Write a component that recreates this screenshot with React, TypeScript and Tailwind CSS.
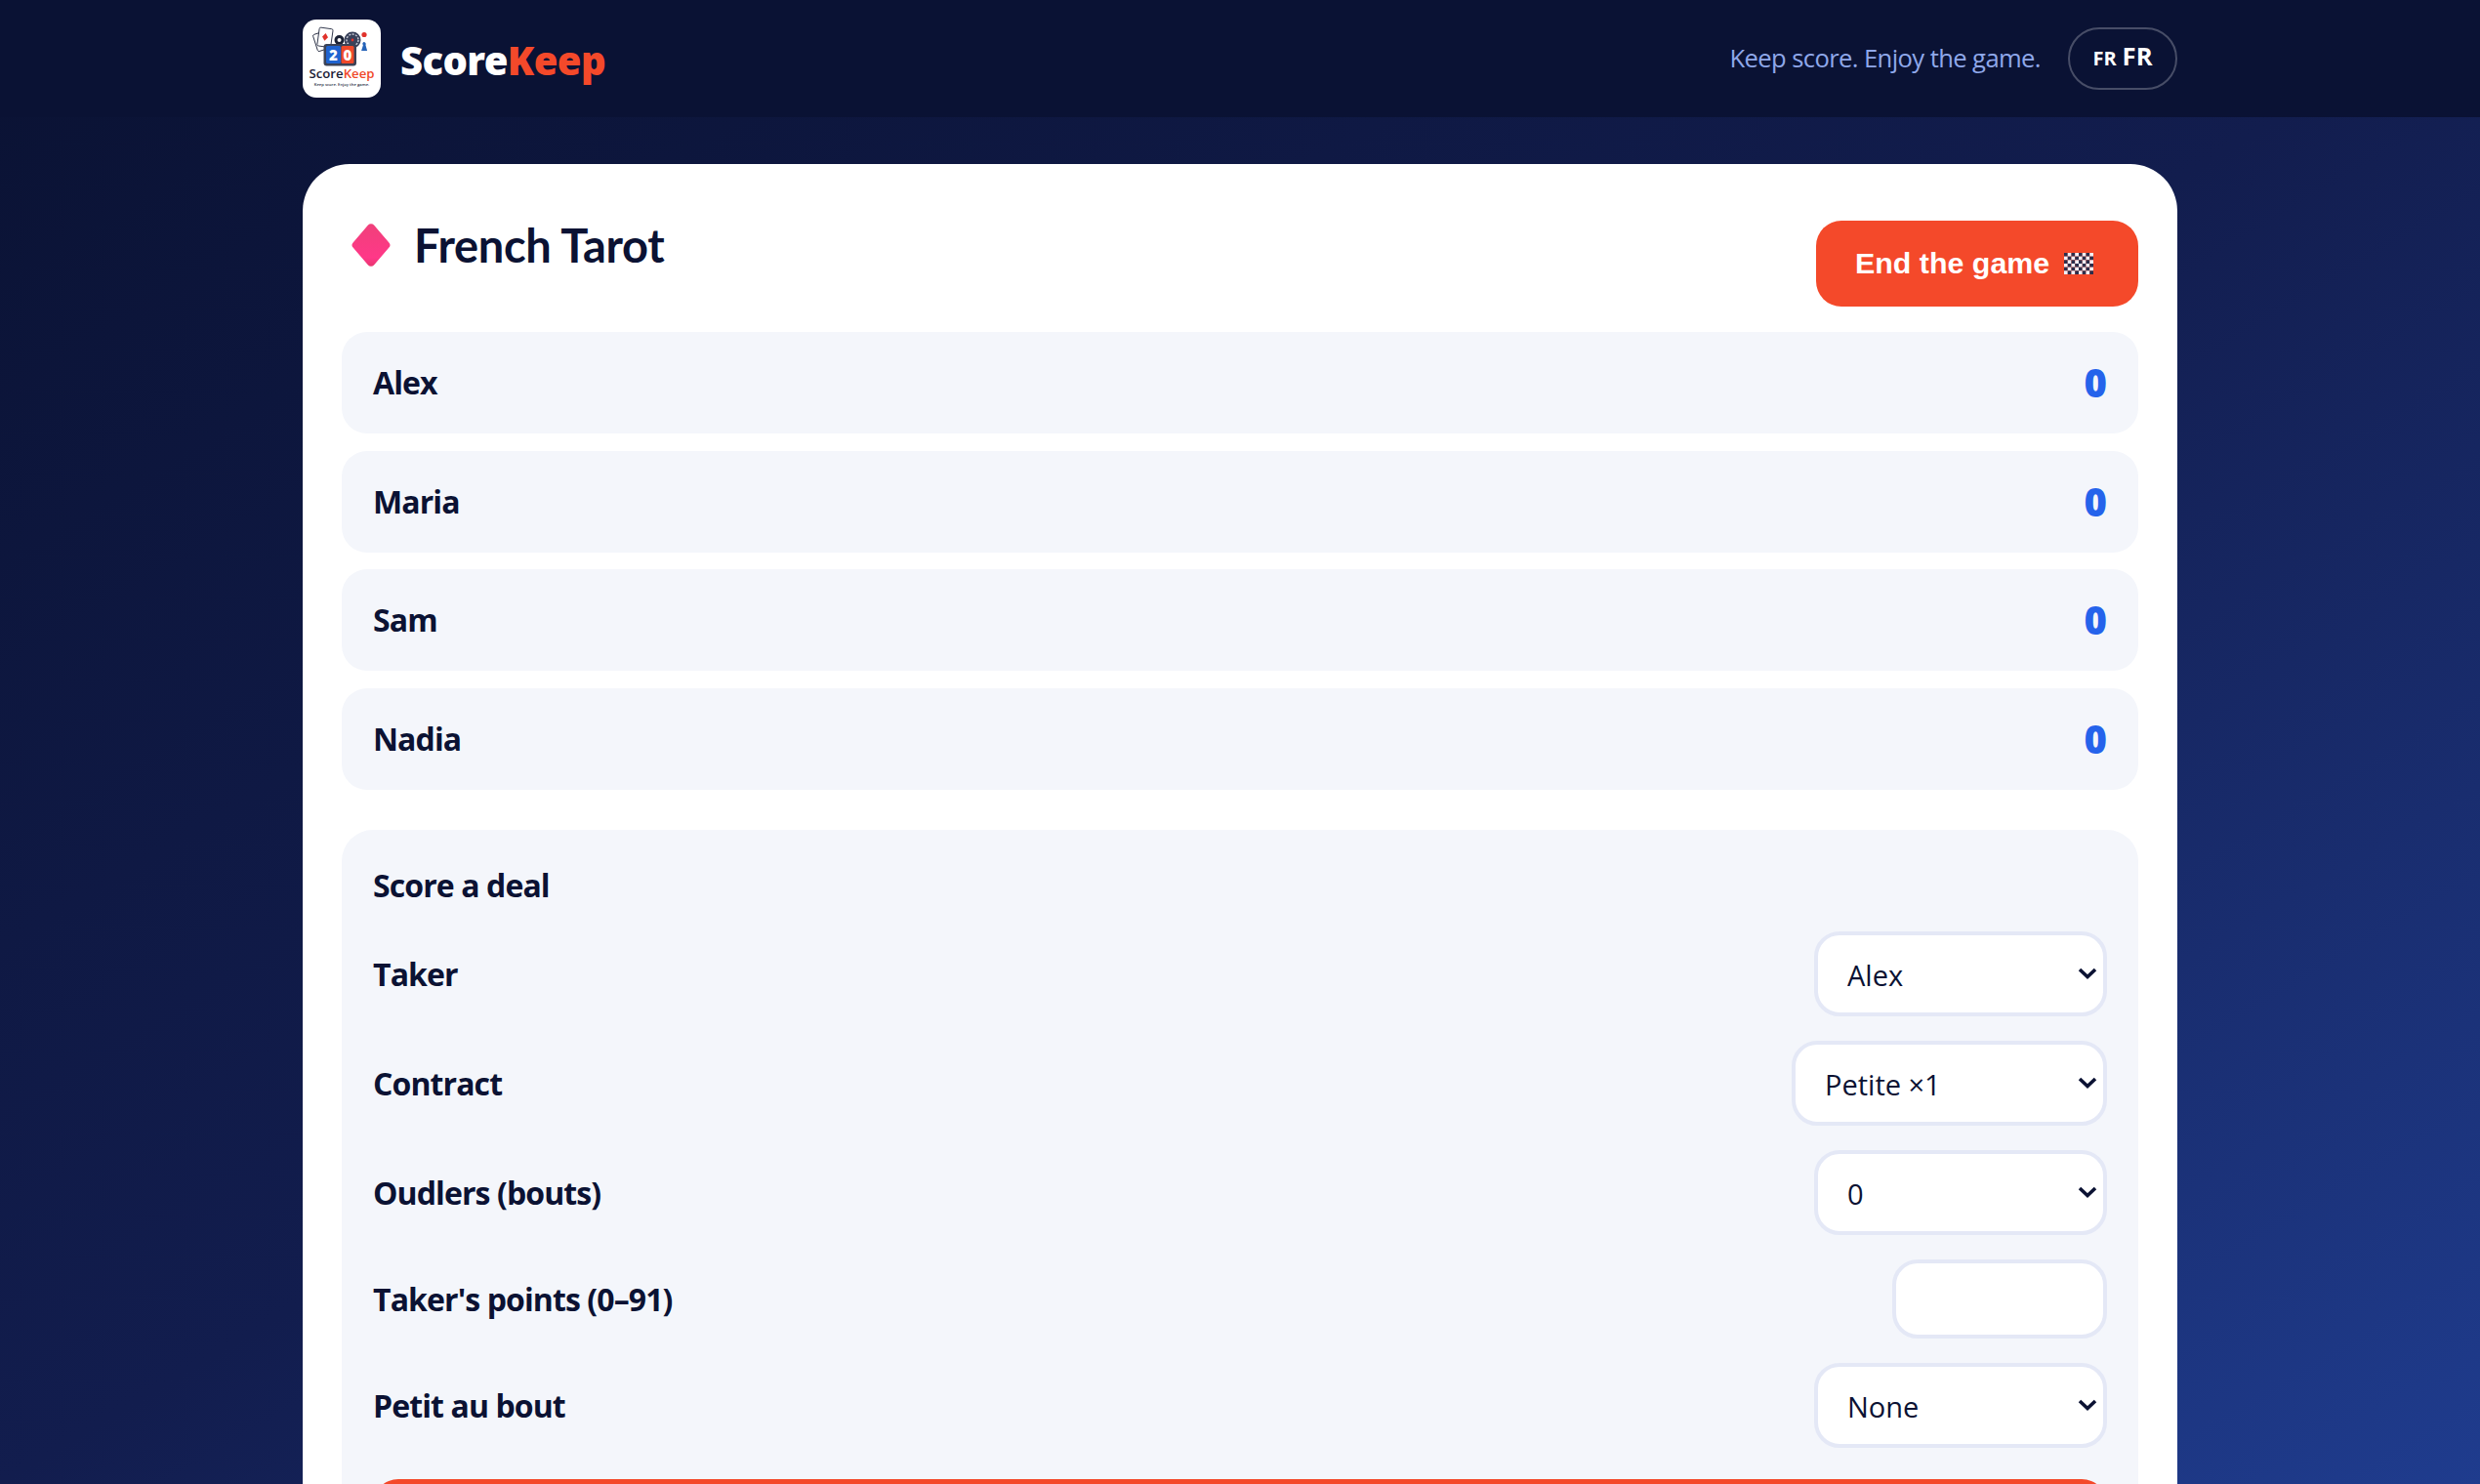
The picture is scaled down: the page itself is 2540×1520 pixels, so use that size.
import React from "react";

const players = ["Alex", "Maria", "Sam", "Nadia"];

const Logo = () => (
  <svg viewBox="0 0 80 80" className="w-[80px] h-[80px] shrink-0">
    <rect width="80" height="80" rx="14" fill="#ffffff" />
    <g transform="rotate(-18 20 20)">
      <rect x="12" y="13" width="13" height="18" rx="1.5" fill="#fff" stroke="#2a3045" strokeWidth="0.9" />
    </g>
    <g transform="rotate(8 24 18)">
      <rect x="16" y="9" width="14" height="19" rx="1.5" fill="#fff" stroke="#2a3045" strokeWidth="0.9" />
      <path d="M23 14l3 4-3 4-3-4z" fill="#e0322b" />
    </g>
    <circle cx="37.5" cy="21" r="5" fill="#1b2235" />
    <circle cx="37.5" cy="21" r="2" fill="#fff" />
    <circle cx="51" cy="21" r="8.5" fill="#39415a" />
    <circle cx="51" cy="21" r="6" fill="none" stroke="#c9ccd6" strokeWidth="1.4" strokeDasharray="2 1.4" />
    <circle cx="51" cy="21" r="1.4" fill="#e0322b" />
    <circle cx="63" cy="15.5" r="2.6" fill="#e0322b" />
    <path d="M62.5 23a2.2 2.2 0 0 1 2 3.2l1.6 5.8h-6l1.8-5.8a2.2 2.2 0 0 1 .6-3.2z" fill="#2563b8" />
    <rect x="21.5" y="25" width="33.5" height="22.5" rx="3" fill="#3b4256" />
    <rect x="24" y="27" width="15" height="18" rx="1.5" fill="#1f63d0" />
    <rect x="39.5" y="27" width="13" height="18" rx="1.5" fill="#f0492a" />
    <text x="31.5" y="41.5" textAnchor="middle" fontSize="15" fontWeight="800" fill="#fff" fontFamily="Open Sans, sans-serif">2</text>
    <text x="46" y="41.5" textAnchor="middle" fontSize="15" fontWeight="800" fill="#fff" fontFamily="Open Sans, sans-serif">0</text>
    <text x="6.5" y="60" fontSize="13.2" fontWeight="600" fill="#1a2035" fontFamily="Open Sans, sans-serif">Score<tspan fill="#f0492a">Keep</tspan></text>
    <text x="40" y="67.5" textAnchor="middle" fontSize="4.2" fontWeight="600" fill="#2a3045" fontFamily="Open Sans, sans-serif">Keep score. Enjoy the game.</text>
  </svg>
);

const Diamond = () => (
  <svg viewBox="0 0 40 46" className="w-[40px] h-[46px] shrink-0">
    <defs>
      <linearGradient id="dia" x1="0" y1="0" x2="0" y2="1">
        <stop offset="0" stopColor="#f0407a" />
        <stop offset="0.8" stopColor="#ff3888" />
        <stop offset="1" stopColor="#e8356f" />
      </linearGradient>
    </defs>
    <path d="M17 2.5a4 4 0 0 1 6 0l15.2 17.7a4 4 0 0 1 0 5.6L23 43.5a4 4 0 0 1-6 0L1.8 25.8a4 4 0 0 1 0-5.6z" fill="url(#dia)" />
  </svg>
);

const Checker = () => {
  const cells = [];
  for (let r = 0; r < 6; r++) {
    for (let c = 0; c < 8; c++) {
      cells.push(<rect key={r + "-" + c} x={c * 3.75} y={r * 3.67} width="3.75" height="3.67" fill={(r + c) % 2 === 0 ? "#2b2e4c" : "#f0f0fa"} />);
    }
  }
  return (
    <svg viewBox="0 0 30 22" className="w-[30px] h-[22px] shrink-0">
      {cells}
    </svg>
  );
};

const Field = ({ label, children }: { label: string; children: React.ReactNode }) => (
  <div className="flex items-center justify-between">
    <label className="text-[32px] font-bold text-[#0b1233] tracking-[-0.9px]">{label}</label>
    {children}
  </div>
);

const Select = ({ width, value, options }: { width: string; value: string; options: string[] }) => (
  <div className={"relative " + width}>
    <select
      defaultValue={value}
      className="w-full h-[87px] appearance-none bg-white border-[4px] border-[#e4e8f6] rounded-[26px] pl-[30px] pr-[50px] pt-[2px] text-[29px] text-[#0b1233] outline-none"
    >
      {options.map((o) => (
        <option key={o}>{o}</option>
      ))}
    </select>
    <svg viewBox="0 0 20 12" className="absolute right-[10px] top-[37px] w-[20px] h-[12px] pointer-events-none">
      <path d="M2 2l8 7.5L18 2" fill="none" stroke="#0b1233" strokeWidth="3.6" />
    </svg>
  </div>
);

export default function App() {
  return (
    <div className="h-screen overflow-hidden bg-gradient-to-br from-[#0a1233] via-[#121d4e] via-50% to-[#1f3c8e] font-['Open_Sans',sans-serif]">
      <header className="h-[120px] bg-[#0a1234]">
        <div className="mx-auto w-[1920px] h-full flex items-center justify-between">
          <div className="flex items-center gap-[20px]">
            <Logo />
            <div className="text-[40px] font-black text-white tracking-[-0.6px] mt-[3px] font-['Noto_Sans',sans-serif]">
              Score<span className="text-[#f4492a]">Keep</span>
            </div>
          </div>
          <div className="flex items-center gap-[28px]">
            <span className="text-[25.6px] text-[#8fa8ea] tracking-[-0.6px]">Keep score. Enjoy the game.</span>
            <button className="w-[112px] h-[64px] rounded-full border-[2px] border-white/25 text-white font-bold text-[25.6px] flex items-center justify-center gap-[6px]">
              <span className="text-[20px]">FR</span>
              <span className="-mt-[3px]">FR</span>
            </button>
          </div>
        </div>
      </header>

      <main className="mx-auto w-[1920px] mt-[48px] bg-white rounded-t-[48px] px-[40px] pt-[58px]">
        <div className="flex justify-between items-start h-[114px]">
          <div className="flex items-center gap-[24px] -mt-[3px] ml-[10px]">
            <Diamond />
            <h1 className="text-[47px] font-bold text-[#0b1233] tracking-[-0.3px] leading-[56px] font-['Lato',sans-serif]">French Tarot</h1>
          </div>
          <button className="w-[330px] h-[88px] rounded-[26px] bg-[#f4492a] text-white text-[30.4px] font-bold font-['Liberation_Sans',sans-serif] flex items-center pl-[40px] gap-[15px]">
            End the game
            <Checker />
          </button>
        </div>

        <div className="flex flex-col gap-[17.6px]">
          {players.map((p) => (
            <div key={p} className="h-[104px] rounded-[26px] bg-[#f4f6fb] px-[32px] flex items-center justify-between">
              <span className="text-[32px] font-bold text-[#0b1233] tracking-[-0.9px]">{p}</span>
              <span className="text-[40px] font-extrabold text-[#2563eb]">0</span>
            </div>
          ))}
        </div>

        <section className="mt-[41px] rounded-[32px] bg-[#f4f6fb] px-[32px] pt-[32px] pb-[32px]">
          <h2 className="h-[50px] leading-[50px] text-[32px] font-bold text-[#0b1233] tracking-[-0.9px] mb-[22.5px]">Score a deal</h2>
          <div className="flex flex-col gap-[25px]">
            <Field label="Taker">
              <Select width="w-[300px]" value="Alex" options={players} />
            </Field>
            <Field label="Contract">
              <Select width="w-[323px]" value="Petite ×1" options={["Petite ×1", "Garde ×2", "Garde sans ×4", "Garde contre ×6"]} />
            </Field>
            <Field label="Oudlers (bouts)">
              <Select width="w-[300px]" value="0" options={["0", "1", "2", "3"]} />
            </Field>
            <Field label="Taker's points (0–91)">
              <input type="number" className="w-[220px] h-[81px] bg-white border-[4px] border-[#e4e8f6] rounded-[26px] outline-none" />
            </Field>
            <Field label="Petit au bout">
              <Select width="w-[300px]" value="None" options={["None", ...players]} />
            </Field>
          </div>
          <button aria-label="Add the deal" className="mt-[32px] w-full h-[88px] rounded-[26px] bg-[#f4492a]" />
        </section>
      </main>
    </div>
  );
}
